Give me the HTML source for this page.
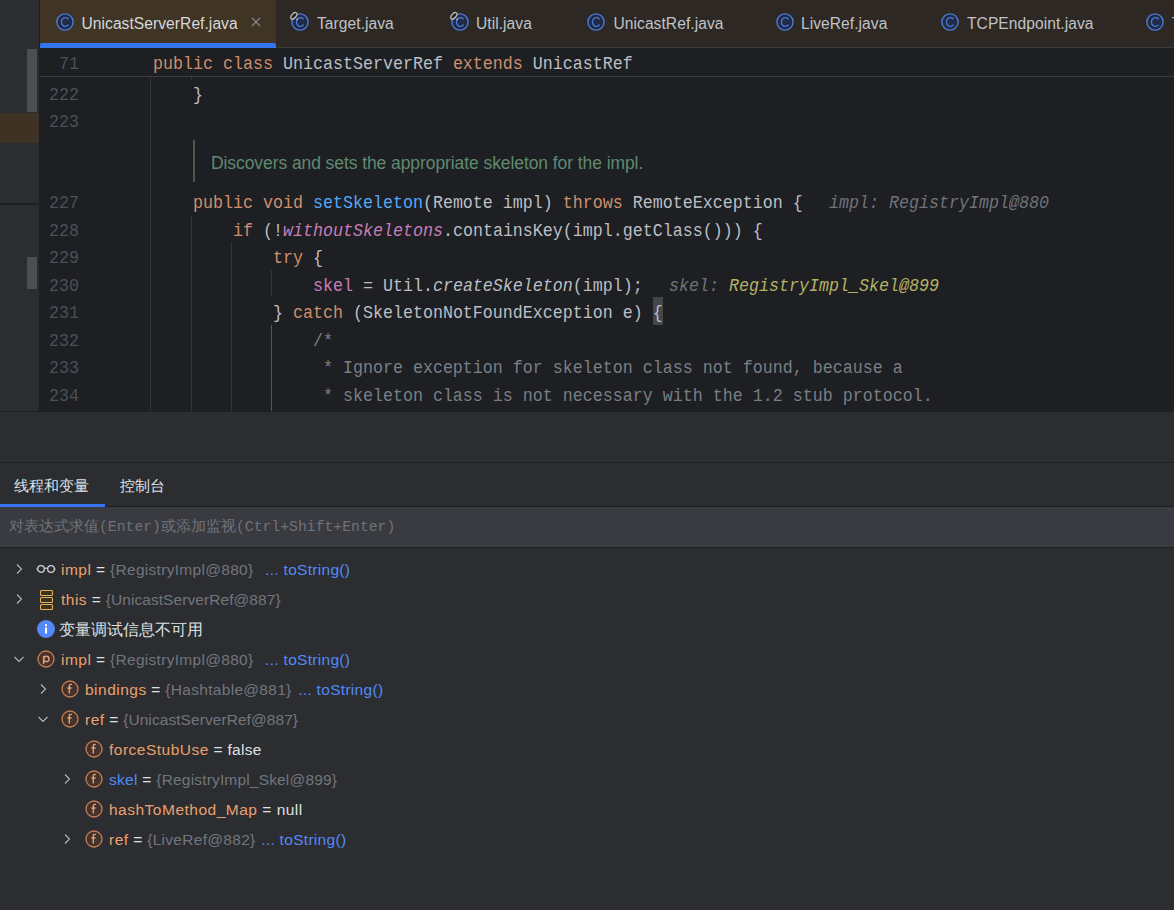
<!DOCTYPE html><html><head><meta charset="utf-8"><style>
*{margin:0;padding:0;box-sizing:border-box}
html,body{width:1174px;height:910px;overflow:hidden;background:#2b2d30;font-family:"Liberation Sans",sans-serif}
.a{position:absolute}
.tt{font-size:15.6px;letter-spacing:0.05px;color:#bfc2c7;white-space:pre;line-height:20px}
.code{position:absolute;font-family:"Liberation Mono",monospace;font-size:16.66px;white-space:pre;line-height:20px;color:#bcbec4;transform:scaleY(1.09);transform-origin:0 14.4px}
.ln{position:absolute;font-family:"Liberation Mono",monospace;font-size:16.66px;white-space:pre;line-height:20px;color:#4b5059;text-align:right;width:60px;transform:scaleY(1.09);transform-origin:0 14.4px}
.kw{color:#cf8e6d}
.md{color:#56a8f5}
.sf{color:#c77dbb;font-style:italic}
.fl{color:#c77dbb}
.it{font-style:italic}
.cm{color:#7a7e85}
.hv{color:#6f737a;font-style:italic}
.hy{color:#b5b165;font-style:italic}
.g{position:absolute;width:1px;background:#313338}
.dbt{position:absolute;font-size:15px;color:#dfe1e5;white-space:pre;line-height:20px}
.tr{position:absolute;font-size:15.5px;letter-spacing:0.3px;white-space:pre;line-height:20px;color:#dfe1e5}
.nm{color:#eba06e;letter-spacing:0.5px}
.nmb{color:#548af7}
.gr{color:#72767d;letter-spacing:0.3px}
.lk{color:#548af7}
</style></head><body>
<div class="a" style="left:0px;top:0px;width:39px;height:411px;background:#2b2d30;"></div>
<div class="a" style="left:39px;top:0px;width:1px;height:48px;background:#1e1f22;"></div>
<div class="a" style="left:27px;top:49px;width:10px;height:63px;background:#4c4e52;"></div>
<div class="a" style="left:0px;top:113px;width:39px;height:30px;background:#3d3223;"></div>
<div class="a" style="left:0px;top:203px;width:39px;height:2px;background:#1e1f22;"></div>
<div class="a" style="left:27px;top:257px;width:10px;height:32px;background:#4c4e52;"></div>
<div class="a" style="left:40px;top:0px;width:1134px;height:47px;background:#2d2823;"></div>
<div class="a" style="left:40px;top:0px;width:236px;height:47px;background:#403425;"></div>
<div class="a" style="left:40px;top:47px;width:1134px;height:1px;background:#393b40;"></div>
<div class="a" style="left:40px;top:43px;width:236px;height:5px;background:#3574f0;border-radius:2px 2px 0 0"></div>
<svg class="a" style="left:56px;top:13px;overflow:visible" width="18" height="18" viewBox="0 0 18 18"><circle cx="9" cy="9" r="8.1" fill="#212b45" stroke="#4a7bd9" stroke-width="1.4"/><path d="M12.6 6.4 A4 4.3 0 1 0 12.6 11.6" fill="none" stroke="#4a7bd9" stroke-width="1.3"/></svg>
<div class="a tt" style="left:81.5px;top:14px;color:#d6d8dc">UnicastServerRef.java</div>
<svg class="a" style="left:291px;top:13px;overflow:visible" width="18" height="18" viewBox="0 0 18 18"><circle cx="9" cy="9" r="8.1" fill="#212b45" stroke="#4a7bd9" stroke-width="1.4"/><path d="M12.6 6.4 A4 4.3 0 1 0 12.6 11.6" fill="none" stroke="#4a7bd9" stroke-width="1.3"/><ellipse cx="2.8" cy="2.8" rx="4" ry="2.2" transform="rotate(-48 2.8 2.8)" fill="#2d2823" stroke="#c4c4c4" stroke-width="1.2"/><circle cx="6.2" cy="6.3" r="0.9" fill="#c4c4c4"/></svg>
<div class="a tt" style="left:317px;top:14px;color:#bfc2c7">Target.java</div>
<svg class="a" style="left:451px;top:13px;overflow:visible" width="18" height="18" viewBox="0 0 18 18"><circle cx="9" cy="9" r="8.1" fill="#212b45" stroke="#4a7bd9" stroke-width="1.4"/><path d="M12.6 6.4 A4 4.3 0 1 0 12.6 11.6" fill="none" stroke="#4a7bd9" stroke-width="1.3"/><ellipse cx="2.8" cy="2.8" rx="4" ry="2.2" transform="rotate(-48 2.8 2.8)" fill="#2d2823" stroke="#c4c4c4" stroke-width="1.2"/><circle cx="6.2" cy="6.3" r="0.9" fill="#c4c4c4"/></svg>
<div class="a tt" style="left:476px;top:14px;color:#bfc2c7">Util.java</div>
<svg class="a" style="left:587px;top:13px;overflow:visible" width="18" height="18" viewBox="0 0 18 18"><circle cx="9" cy="9" r="8.1" fill="#212b45" stroke="#4a7bd9" stroke-width="1.4"/><path d="M12.6 6.4 A4 4.3 0 1 0 12.6 11.6" fill="none" stroke="#4a7bd9" stroke-width="1.3"/></svg>
<div class="a tt" style="left:613.5px;top:14px;color:#bfc2c7">UnicastRef.java</div>
<svg class="a" style="left:776px;top:13px;overflow:visible" width="18" height="18" viewBox="0 0 18 18"><circle cx="9" cy="9" r="8.1" fill="#212b45" stroke="#4a7bd9" stroke-width="1.4"/><path d="M12.6 6.4 A4 4.3 0 1 0 12.6 11.6" fill="none" stroke="#4a7bd9" stroke-width="1.3"/></svg>
<div class="a tt" style="left:801px;top:14px;color:#bfc2c7">LiveRef.java</div>
<svg class="a" style="left:941px;top:13px;overflow:visible" width="18" height="18" viewBox="0 0 18 18"><circle cx="9" cy="9" r="8.1" fill="#212b45" stroke="#4a7bd9" stroke-width="1.4"/><path d="M12.6 6.4 A4 4.3 0 1 0 12.6 11.6" fill="none" stroke="#4a7bd9" stroke-width="1.3"/></svg>
<div class="a tt" style="left:967px;top:14px;color:#bfc2c7">TCPEndpoint.java</div>
<svg class="a" style="left:1146px;top:13px;overflow:visible" width="18" height="18" viewBox="0 0 18 18"><circle cx="9" cy="9" r="8.1" fill="#212b45" stroke="#4a7bd9" stroke-width="1.4"/><path d="M12.6 6.4 A4 4.3 0 1 0 12.6 11.6" fill="none" stroke="#4a7bd9" stroke-width="1.3"/></svg>
<div class="a tt" style="left:1172px;top:14px;color:#bfc2c7">TCPTransport.java</div>
<svg class="a" style="left:251px;top:17px" width="10" height="10" viewBox="0 0 10 10"><path d="M1 1L9 9M9 1L1 9" stroke="#8c8f94" stroke-width="1.1"/></svg>
<div class="a" style="left:39px;top:48px;width:1135px;height:364px;background:#1e1f22;"></div>
<div class="a" style="left:40px;top:76px;width:1134px;height:1px;background:#393b40;"></div>
<div class="g" style="left:150px;top:77px;height:334px"></div>
<div class="g" style="left:191px;top:77px;height:3px"></div>
<div class="g" style="left:191px;top:215px;height:196px"></div>
<div class="g" style="left:231px;top:242px;height:169px"></div>
<div class="g" style="left:271px;top:270px;height:27px"></div>
<div class="g" style="left:271px;top:325px;height:86px;background:#55585e"></div>
<div class="ln" style="left:19px;top:55px">71</div>
<div class="code" style="left:153px;top:55px"><span class="kw">public class </span>UnicastServerRef <span class="kw">extends </span>UnicastRef</div>
<div class="ln" style="left:19px;top:86px">222</div>
<div class="code" style="left:153px;top:86px">    }</div>
<div class="ln" style="left:19px;top:113px">223</div>
<div class="code" style="left:153px;top:113px"></div>
<div class="a" style="left:193px;top:140px;width:2px;height:42px;background:#4b5a48;"></div>
<div class="a" style="left:211px;top:153px;font-size:17.5px;letter-spacing:-0.08px;line-height:20px;color:#5f8a70;white-space:pre">Discovers and sets the appropriate skeleton for the impl.</div>
<div class="ln" style="left:19px;top:194px">227</div>
<div class="code" style="left:153px;top:194px">    <span class="kw">public void </span><span class="md">setSkeleton</span>(Remote impl) <span class="kw">throws </span>RemoteException {</div>
<div class="code" style="left:829px;top:194px"><span class="hv">impl: RegistryImpl@880</span></div>
<div class="ln" style="left:19px;top:222px">228</div>
<div class="code" style="left:153px;top:222px">        <span class="kw">if </span>(!<span class="sf">withoutSkeletons</span>.containsKey(impl.getClass())) {</div>
<div class="ln" style="left:19px;top:249px">229</div>
<div class="code" style="left:153px;top:249px">            <span class="kw">try </span>{</div>
<div class="ln" style="left:19px;top:277px">230</div>
<div class="code" style="left:153px;top:277px">                <span class="fl">skel</span> = Util.<span class="it">createSkeleton</span>(impl);</div>
<div class="code" style="left:669px;top:277px"><span class="hv">skel: </span><span class="hy">RegistryImpl_Skel@899</span></div>
<div class="a" style="left:653px;top:297px;width:10px;height:28px;background:#44464b;"></div>
<div class="ln" style="left:19px;top:304px">231</div>
<div class="code" style="left:153px;top:304px">            } <span class="kw">catch </span>(SkeletonNotFoundException e) {</div>
<div class="ln" style="left:19px;top:332px">232</div>
<div class="code" style="left:153px;top:332px">                <span class="cm">/*</span></div>
<div class="ln" style="left:19px;top:359px">233</div>
<div class="code" style="left:153px;top:359px">                <span class="cm"> * Ignore exception for skeleton class not found, because a</span></div>
<div class="ln" style="left:19px;top:387px">234</div>
<div class="code" style="left:153px;top:387px">                <span class="cm"> * skeleton class is not necessary with the 1.2 stub protocol.</span></div>
<div class="a" style="left:0px;top:412px;width:1174px;height:498px;background:#2b2d30;"></div>
<div class="a" style="left:0px;top:411px;width:39px;height:1px;background:#1e1f22;"></div>
<div class="a" style="left:0px;top:462px;width:1174px;height:1px;background:#1e1f22;"></div>
<div class="dbt" style="left:14px;top:476px">线程和变量</div>
<div class="dbt" style="left:120px;top:476px">控制台</div>
<div class="a" style="left:0px;top:506px;width:1174px;height:1px;background:#1e1f22;"></div>
<div class="a" style="left:0px;top:507px;width:1174px;height:40px;background:#393b40;"></div>
<div class="a" style="left:0px;top:547px;width:1174px;height:1px;background:#1e1f22;"></div>
<div class="a" style="left:0px;top:504px;width:105px;height:3px;background:#3574f0;"></div>
<div class="a" style="left:9px;top:516px;font-size:15px;line-height:20px;color:#6f737a;white-space:pre">对表达式求值<span style="font-family:'Liberation Mono',monospace;font-size:14.75px">(Enter)</span>或添加监视<span style="font-family:'Liberation Mono',monospace;font-size:14.75px">(Ctrl+Shift+Enter)</span></div>
<svg class="a" style="left:13px;top:563px" width="12" height="12" viewBox="0 0 12 12"><path d="M4 1.5L8.5 6L4 10.5" fill="none" stroke="#b4b7bd" stroke-width="1.1"/></svg>
<svg class="a" style="left:36px;top:562px" width="20" height="14" viewBox="0 0 20 14"><circle cx="5" cy="7" r="3.3" fill="none" stroke="#ced0d6" stroke-width="1.3"/><circle cx="15" cy="7" r="3.3" fill="none" stroke="#ced0d6" stroke-width="1.3"/><path d="M8.3 6.6Q10 5.6 11.7 6.6M1.7 6.8L0.4 7.2M18.3 6.8L19.6 7.2" fill="none" stroke="#ced0d6" stroke-width="1.2"/></svg>
<div class="tr" style="left:61px;top:560px"><span class="nm">impl</span> = <span class="gr">{RegistryImpl@880}</span> <span class="lk" style="margin-left:7px">... toString()</span></div>
<svg class="a" style="left:13px;top:593px" width="12" height="12" viewBox="0 0 12 12"><path d="M4 1.5L8.5 6L4 10.5" fill="none" stroke="#b4b7bd" stroke-width="1.1"/></svg>
<svg class="a" style="left:38px;top:589px" width="16" height="22" viewBox="0 0 16 22"><rect x="2.5" y="1.5" width="12" height="5" rx="1" fill="#3a3020" stroke="#e5b45f" stroke-width="1.1"/><rect x="2.5" y="8.5" width="12" height="5" rx="1" fill="#3a3020" stroke="#e5b45f" stroke-width="1.1"/><rect x="2.5" y="15.5" width="12" height="5" rx="1" fill="#3a3020" stroke="#e5b45f" stroke-width="1.1"/></svg>
<div class="tr" style="left:61px;top:590px"><span class="nm">this</span> = <span class="gr" style="letter-spacing:0.07px">{UnicastServerRef@887}</span></div>
<svg class="a" style="left:37px;top:620px" width="18" height="18" viewBox="0 0 18 18"><circle cx="9" cy="9" r="9" fill="#548af7"/><rect x="8" y="7.5" width="2" height="6" fill="#fff"/><rect x="8" y="4.2" width="2" height="2" fill="#fff"/></svg>
<div class="tr" style="left:59px;top:620px"><span style="letter-spacing:0">变量调试信息不可用</span></div>
<svg class="a" style="left:13px;top:653px" width="12" height="12" viewBox="0 0 12 12"><path d="M1.5 4L6 8.5L10.5 4" fill="none" stroke="#b4b7bd" stroke-width="1.1"/></svg>
<svg class="a" style="left:37px;top:650px" width="18" height="18" viewBox="0 0 18 18"><circle cx="9" cy="9" r="8" fill="#45322b" stroke="#c77d55" stroke-width="1.3"/><path d="M6.6 6V14.2" fill="none" stroke="#e0a27a" stroke-width="1.4"/><circle cx="9.3" cy="8.9" r="2.7" fill="none" stroke="#e0a27a" stroke-width="1.4"/></svg>
<div class="tr" style="left:61px;top:650px"><span class="nm">impl</span> = <span class="gr">{RegistryImpl@880}</span> <span class="lk" style="margin-left:7px">... toString()</span></div>
<svg class="a" style="left:37px;top:683px" width="12" height="12" viewBox="0 0 12 12"><path d="M4 1.5L8.5 6L4 10.5" fill="none" stroke="#b4b7bd" stroke-width="1.1"/></svg>
<svg class="a" style="left:61px;top:680px" width="18" height="18" viewBox="0 0 18 18"><circle cx="9" cy="9" r="8" fill="#45322b" stroke="#c77d55" stroke-width="1.3"/><path d="M10.8 4.6C10.2 4.2 8.6 4.2 8.3 5.6L8.3 13.6M6.4 8H10.6" fill="none" stroke="#e0a27a" stroke-width="1.4"/></svg>
<div class="tr" style="left:85px;top:680px"><span class="nm">bindings</span> = <span class="gr">{Hashtable@881}</span> <span class="lk" style="margin-left:2px">... toString()</span></div>
<svg class="a" style="left:37px;top:713px" width="12" height="12" viewBox="0 0 12 12"><path d="M1.5 4L6 8.5L10.5 4" fill="none" stroke="#b4b7bd" stroke-width="1.1"/></svg>
<svg class="a" style="left:61px;top:710px" width="18" height="18" viewBox="0 0 18 18"><circle cx="9" cy="9" r="8" fill="#45322b" stroke="#c77d55" stroke-width="1.3"/><path d="M10.8 4.6C10.2 4.2 8.6 4.2 8.3 5.6L8.3 13.6M6.4 8H10.6" fill="none" stroke="#e0a27a" stroke-width="1.4"/></svg>
<div class="tr" style="left:85px;top:710px"><span class="nm">ref</span> = <span class="gr" style="letter-spacing:0.07px">{UnicastServerRef@887}</span></div>
<svg class="a" style="left:85px;top:740px" width="18" height="18" viewBox="0 0 18 18"><circle cx="9" cy="9" r="8" fill="#45322b" stroke="#c77d55" stroke-width="1.3"/><path d="M10.8 4.6C10.2 4.2 8.6 4.2 8.3 5.6L8.3 13.6M6.4 8H10.6" fill="none" stroke="#e0a27a" stroke-width="1.4"/></svg>
<div class="tr" style="left:109px;top:740px"><span class="nm">forceStubUse</span> = false</div>
<svg class="a" style="left:61px;top:773px" width="12" height="12" viewBox="0 0 12 12"><path d="M4 1.5L8.5 6L4 10.5" fill="none" stroke="#b4b7bd" stroke-width="1.1"/></svg>
<svg class="a" style="left:85px;top:770px" width="18" height="18" viewBox="0 0 18 18"><circle cx="9" cy="9" r="8" fill="#45322b" stroke="#c77d55" stroke-width="1.3"/><path d="M10.8 4.6C10.2 4.2 8.6 4.2 8.3 5.6L8.3 13.6M6.4 8H10.6" fill="none" stroke="#e0a27a" stroke-width="1.4"/></svg>
<div class="tr" style="left:109px;top:770px"><span class="nmb">skel</span> = <span class="gr" style="letter-spacing:0.17px">{RegistryImpl_Skel@899}</span></div>
<svg class="a" style="left:85px;top:800px" width="18" height="18" viewBox="0 0 18 18"><circle cx="9" cy="9" r="8" fill="#45322b" stroke="#c77d55" stroke-width="1.3"/><path d="M10.8 4.6C10.2 4.2 8.6 4.2 8.3 5.6L8.3 13.6M6.4 8H10.6" fill="none" stroke="#e0a27a" stroke-width="1.4"/></svg>
<div class="tr" style="left:109px;top:800px"><span style="letter-spacing:0.5px"><span class="nm">hashToMethod_Map</span> = null</span></div>
<svg class="a" style="left:61px;top:833px" width="12" height="12" viewBox="0 0 12 12"><path d="M4 1.5L8.5 6L4 10.5" fill="none" stroke="#b4b7bd" stroke-width="1.1"/></svg>
<svg class="a" style="left:85px;top:830px" width="18" height="18" viewBox="0 0 18 18"><circle cx="9" cy="9" r="8" fill="#45322b" stroke="#c77d55" stroke-width="1.3"/><path d="M10.8 4.6C10.2 4.2 8.6 4.2 8.3 5.6L8.3 13.6M6.4 8H10.6" fill="none" stroke="#e0a27a" stroke-width="1.4"/></svg>
<div class="tr" style="left:109px;top:830px"><span class="nm">ref</span> = <span class="gr">{LiveRef@882}</span> <span class="lk" style="margin-left:1px">... toString()</span></div>
</body></html>
